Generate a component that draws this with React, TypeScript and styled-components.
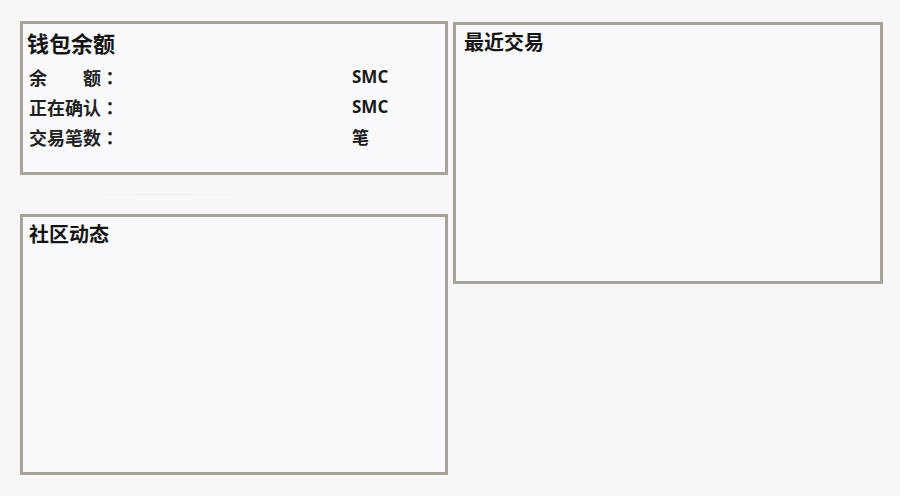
import styled, { createGlobalStyle } from "styled-components";

const GlobalStyle = createGlobalStyle`
  html, body {
    margin: 0;
    padding: 0;
    background: #f7f7f8;
  }
  body {
    font-family: "Noto Sans CJK SC", "Noto Sans", sans-serif;
    color: #111;
  }
`;

const rows = [
  { label: "余　　额：", value: "SMC" },
  { label: "正在确认：", value: "SMC" },
  { label: "交易笔数：", value: "笔" },
];

const App = () => {
  return (
    <>
      <GlobalStyle />
      <Page>
        <LeftColumn>
          <Panel $height={154}>
            <Title $size={22} $left={4}>钱包余额</Title>
            <Rows>
              {rows.map((row) => (
                <Row key={row.label}>
                  <Label>{row.label}</Label>
                  <Value>{row.value}</Value>
                </Row>
              ))}
            </Rows>
          </Panel>
          <Divider />
          <Panel $height={261}>
            <Title $size={20} $left={6}>社区动态</Title>
          </Panel>
        </LeftColumn>
        <RightColumn>
          <Panel $height={262} $width={430}>
            <Title $size={20} $left={8}>最近交易</Title>
          </Panel>
        </RightColumn>
      </Page>
    </>
  );
};

const Page = styled.div`
  display: grid;
  grid-template-columns: 428px 430px;
  column-gap: 5px;
  align-items: start;
  padding: 21px 0 0 20px;
`;

const LeftColumn = styled.div`
  display: flex;
  flex-direction: column;
`;

const RightColumn = styled.div`
  padding-top: 1px;
`;

const Panel = styled.section<{ $height: number; $width?: number }>`
  box-sizing: border-box;
  width: ${(p) => p.$width ?? 428}px;
  height: ${(p) => p.$height}px;
  border: 3px solid #a7a399;
  background: #fafafc;
  padding-top: 4px;
  display: flex;
  flex-direction: column;
`;

const Divider = styled.div`
  height: 39px;
  display: flex;
  align-items: center;
  padding-left: 65px;

  &::after {
    content: "";
    display: block;
    width: 165px;
    height: 1px;
    background: linear-gradient(90deg, transparent, #ececef, transparent);
  }
`;

const Title = styled.h2<{ $size: number; $left: number }>`
  margin: 0;
  padding-left: ${(p) => p.$left}px;
  font-size: ${(p) => p.$size}px;
  line-height: 1.3;
  font-weight: 700;
  color: #151515;
`;

const Rows = styled.div`
  display: flex;
  flex-direction: column;
  padding-left: 6px;
  margin-top: 5px;
`;

const Row = styled.div`
  display: grid;
  grid-template-columns: 323px auto;
  height: 30px;
  align-items: center;
`;

const Label = styled.span`
  font-family: "Noto Sans CJK TC", "Noto Sans CJK SC", sans-serif;
  font-size: 18px;
  font-weight: 700;
  color: #222;
`;

const Value = styled.span`
  font-family: "Open Sans", "Noto Sans CJK SC", sans-serif;
  font-size: 17px;
  font-weight: 700;
  color: #1a1a1a;
`;

export default App;
